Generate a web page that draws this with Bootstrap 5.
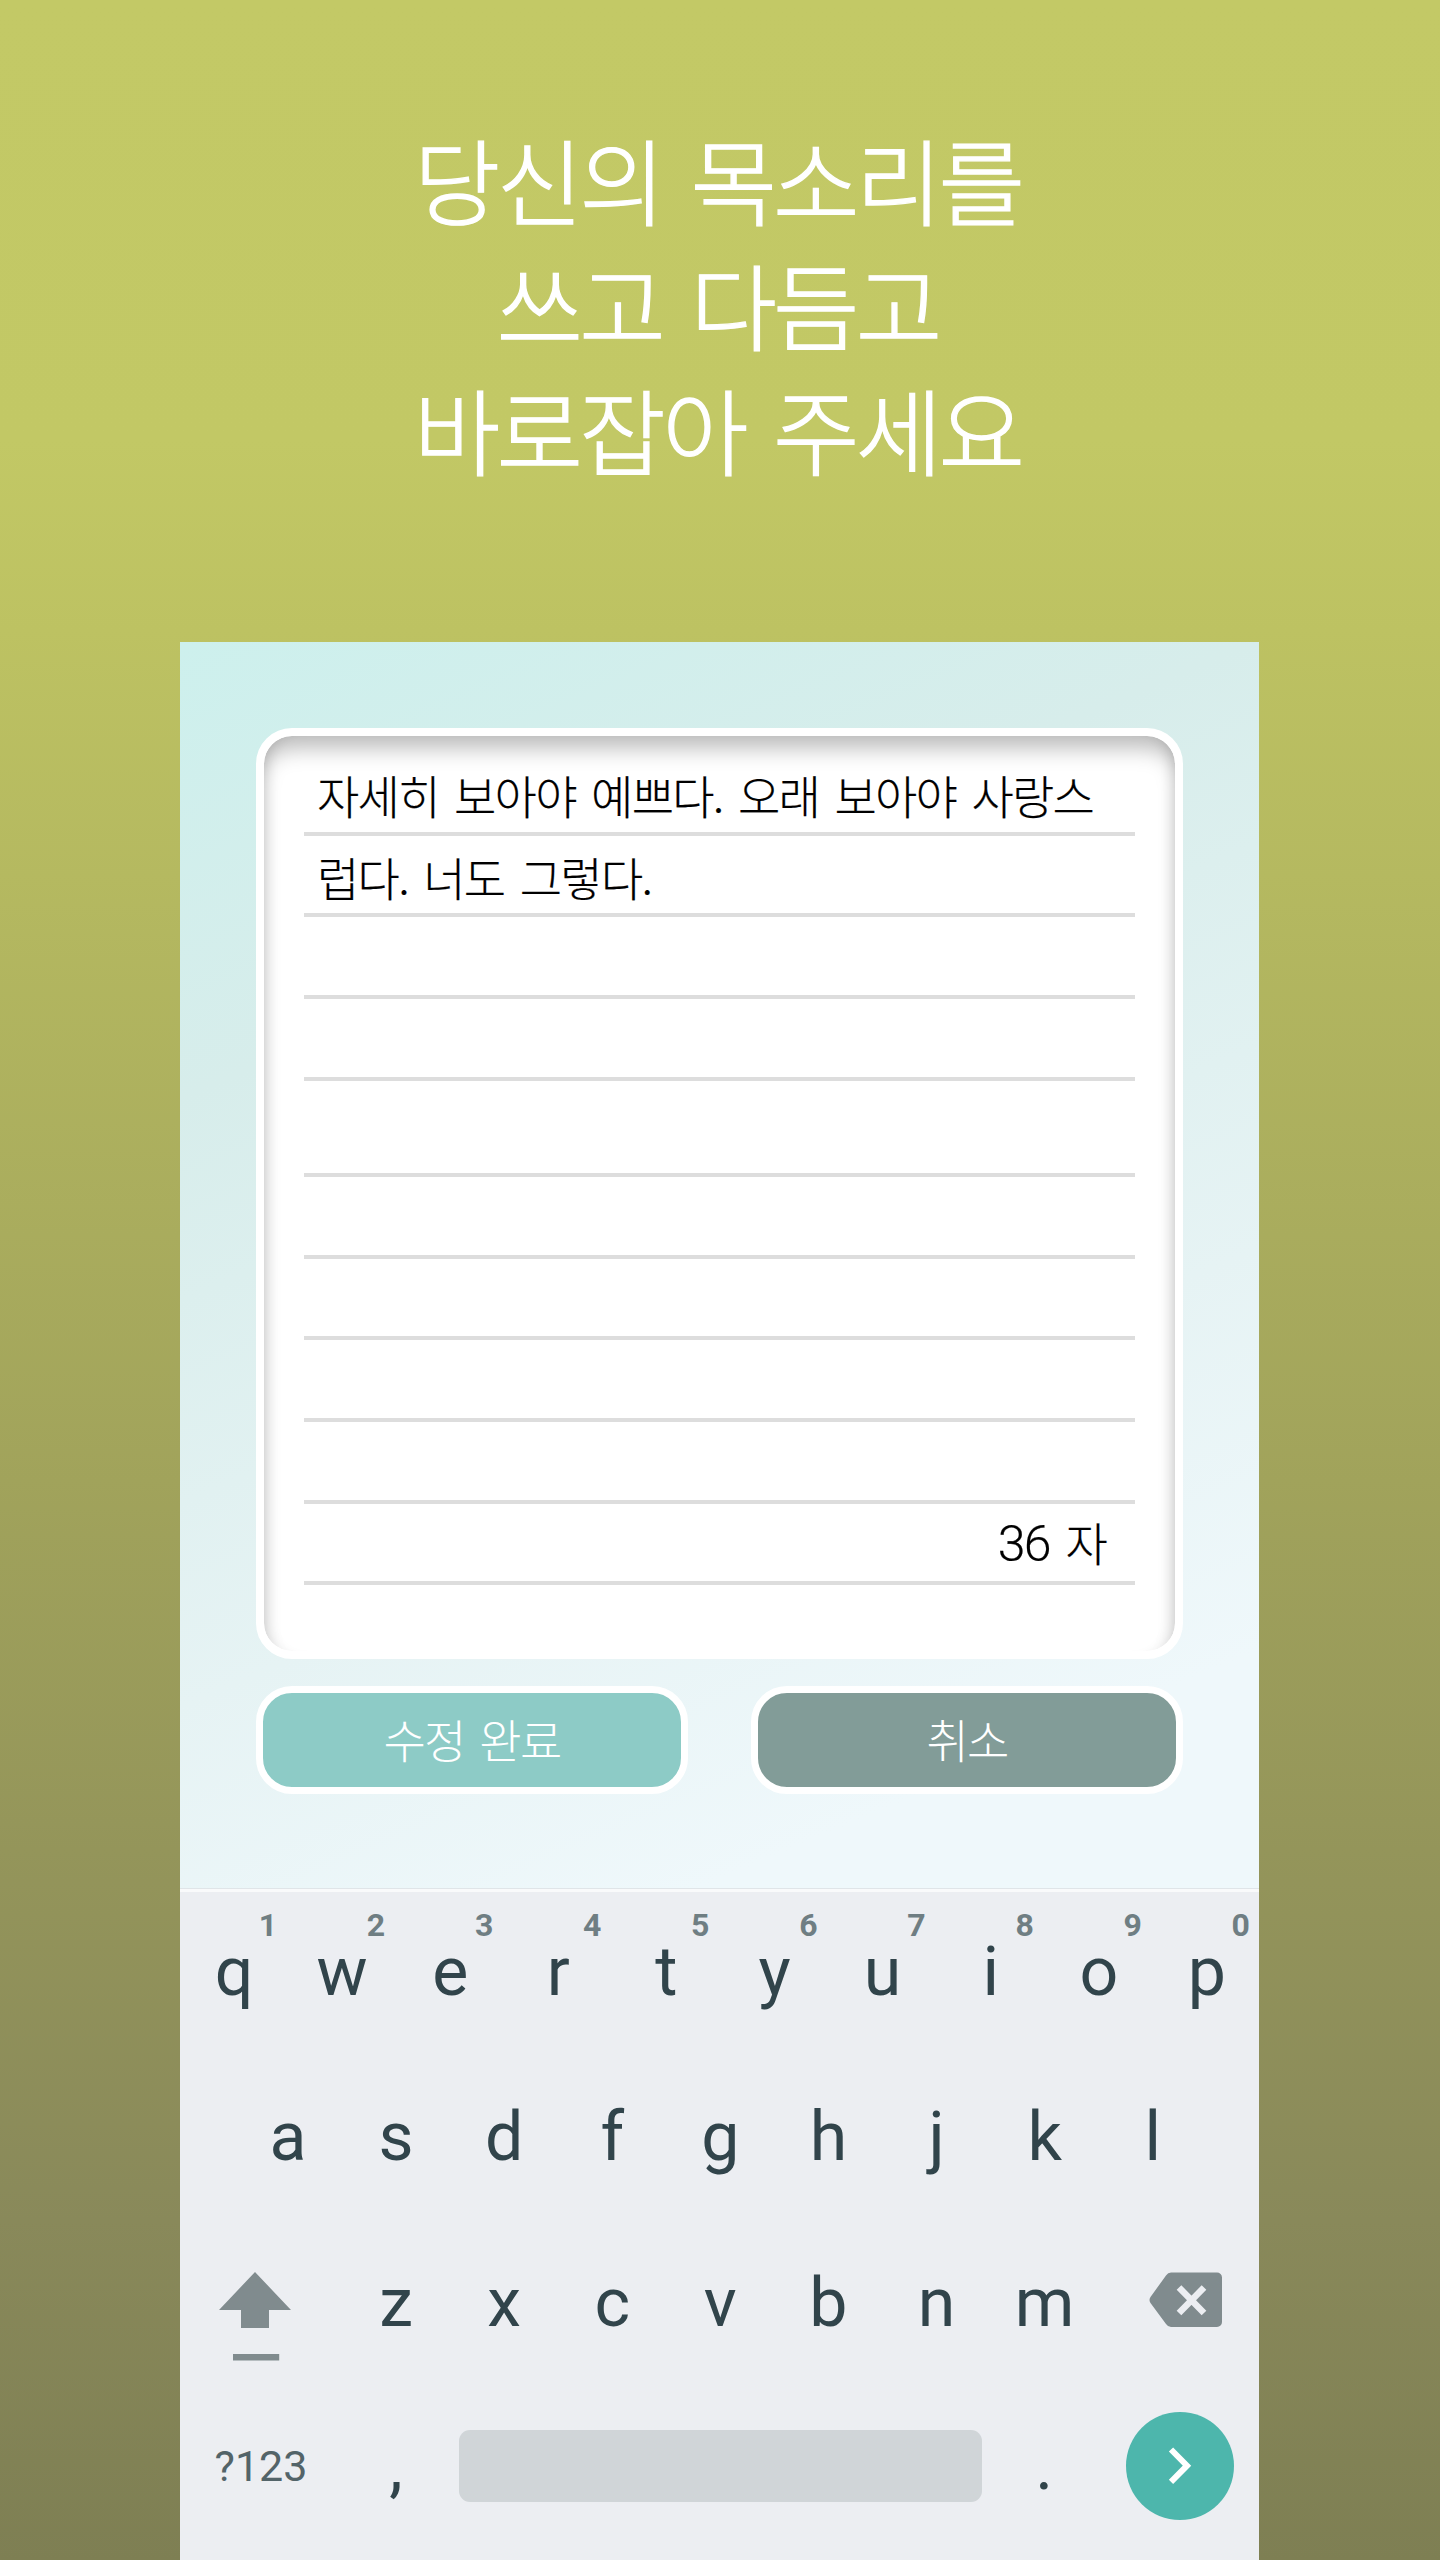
<!DOCTYPE html>
<html lang="ko">
<head>
<meta charset="utf-8">
<meta name="viewport" content="width=device-width, initial-scale=1">
<title>당신의 목소리를 쓰고 다듬고 바로잡아 주세요</title>
<link href="https://cdn.jsdelivr.net/npm/bootstrap@5.3.0/dist/css/bootstrap.min.css" rel="stylesheet">
<style>
  body { font-family: "Noto Sans CJK KR", sans-serif; font-weight: 300; }
  .promo { width: 1440px; height: 2560px; background: linear-gradient(180deg, #c3c966 0, #c2c865 440px, #bdc262 630px, #a1a35b 1480px, #94955a 1850px, #89895a 2220px, #7e7f53 2560px); }
  .headline { height: 642px; padding: 116px 5px 0 0; font-size: 94px; line-height: 125px; font-weight: 300; letter-spacing: -3.8px; word-spacing: 6px; -webkit-text-stroke: 1.3px #fff; }
  .phone { width: 1079px; margin-left: 180px; background: linear-gradient(157deg, #cdf0ed 0, #d7edeb 420px, #e6f3f4 980px, #eff8fb 1350px); }
  .editor { height: 1246px; padding: 86px 76px 0; }
  .note { height: 931px; padding: 18px 40px 0; border: 8px solid #fff; border-radius: 36px; background: #fff; box-shadow: inset 0 18px 22px -6px rgba(0,0,0,.27), inset 14px 0 14px -12px rgba(0,0,0,.12), inset -14px 0 14px -12px rgba(0,0,0,.12); }
  .note-line { height: 81.7px; border-bottom: 4px solid #ddd; color: #000; font-size: 46px; line-height: 80px; padding: 0 13px; white-space: nowrap; letter-spacing: -1.75px; word-spacing: 4.2px; -webkit-text-stroke: .2px #000; }
  .note-line.gap-line { height: 96.3px; }
  .note-line.count-line { padding-right: 29px; line-height: 75px; }
  .count-num { font-family: Roboto, sans-serif; font-size: 50px; font-weight: 300; letter-spacing: -1.5px; }
  .btn-note { width: 432px; height: 108px; border: 7px solid #fff; border-radius: 36px; color: #fff; font-size: 46px; font-weight: 300; line-height: 86px; padding: 0 0 5px; letter-spacing: -1.75px; word-spacing: 3.6px; }
  .btn-done { background: #8dcbc6; }
  .btn-cancel { background: #829c98; }
  .keyboard { height: 672px; padding-top: 1px; background: #eceef2; border-top: 1px solid #e0e5e8; box-shadow: inset 0 3px #f9fafb; font-family: Roboto, sans-serif; font-weight: 400; color: #31444b; font-size: 68px; }
  .key-row { height: 165.3px; }
  .key-row-home { padding-left: 54px; }
  .key { flex: none; width: 108.1px; height: 165.3px; line-height: 165.3px; text-align: center; }
  .key-hint { position: absolute; right: 11px; top: 16px; font-size: 32px; line-height: 38px; font-weight: 700; color: #6f7e83; }
  .key-wide { width: 162px; }
  .key-sym { font-size: 43px; color: #536469; }
  .key-row-last { height: 160.5px; }
  .space-bar { width: 523px; height: 72px; border-radius: 11px; background: #d0d5d8; margin: 0 8px 0 9px; }
  .go { width: 108px; height: 108px; margin-right: 25px; background: #4db6ac; }
</style>
<script src="https://cdn.jsdelivr.net/npm/bootstrap@5.3.0/dist/js/bootstrap.bundle.min.js"></script>
</head>
<body>
<main class="promo overflow-hidden">
  <h1 class="headline text-white text-center m-0">당신의 목소리를<br>쓰고 다듬고<br>바로잡아 주세요</h1>
  <section class="phone">
    <div class="editor">
      <div class="note">
        <div class="note-line">자세히 보아야 예쁘다. 오래 보아야 사랑스</div>
        <div class="note-line">럽다. 너도 그렇다.</div>
        <div class="note-line"></div>
        <div class="note-line"></div>
        <div class="note-line gap-line"></div>
        <div class="note-line"></div>
        <div class="note-line"></div>
        <div class="note-line"></div>
        <div class="note-line"></div>
        <div class="note-line count-line text-end"><span class="count-num">36</span> 자</div>
      </div>
      <div class="d-flex justify-content-between" style="padding-top:27px">
        <button type="button" class="btn btn-note btn-done">수정 완료</button>
        <button type="button" class="btn btn-note btn-cancel">취소</button>
      </div>
    </div>
    <div class="keyboard overflow-hidden">
      <div class="key-row d-flex">
        <div class="key position-relative">q<span class="key-hint">1</span></div>
        <div class="key position-relative">w<span class="key-hint">2</span></div>
        <div class="key position-relative">e<span class="key-hint">3</span></div>
        <div class="key position-relative">r<span class="key-hint">4</span></div>
        <div class="key position-relative">t<span class="key-hint">5</span></div>
        <div class="key position-relative">y<span class="key-hint">6</span></div>
        <div class="key position-relative">u<span class="key-hint">7</span></div>
        <div class="key position-relative">i<span class="key-hint">8</span></div>
        <div class="key position-relative">o<span class="key-hint">9</span></div>
        <div class="key position-relative">p<span class="key-hint">0</span></div>
      </div>
      <div class="key-row key-row-home d-flex">
        <div class="key">a</div><div class="key">s</div><div class="key">d</div><div class="key">f</div><div class="key">g</div><div class="key">h</div><div class="key">j</div><div class="key">k</div><div class="key">l</div>
      </div>
      <div class="key-row d-flex">
        <div class="key-wide flex-shrink-0"><svg class="d-block" width="162" height="165" viewBox="180 2221 162 165" fill="#808b8e"><path d="M255 2272 291 2310H269V2328H241V2310H219Z"/><path d="M233 2354h46.200v6.500H233z"/></svg></div>
        <div class="key">z</div><div class="key">x</div><div class="key">c</div><div class="key">v</div><div class="key">b</div><div class="key">n</div><div class="key">m</div>
        <div class="flex-grow-1"><svg class="d-block" width="160" height="165" viewBox="1099 2221 160 165"><path fill="#808b8e" d="M1171 2272.500H1217a5 5 0 0 1 5 5V2322a5 5 0 0 1-5 5H1171q-3 0-5-3L1150.500 2303q-2-3 0-6L1166 2275.500q2-3 5-3Z"/><path d="m1179 2287.500 25 25.500m0-25.500-25 25.500" stroke="#eceef2" stroke-width="6.500"/></svg></div>
      </div>
      <div class="key-row key-row-last d-flex align-items-center">
        <div class="key key-wide key-sym">?123</div>
        <div class="key">,</div>
        <div class="space-bar flex-shrink-0"></div>
        <div class="key">.</div>
        <div class="go rounded-circle ms-auto flex-shrink-0"><svg class="d-block" width="108" height="108" viewBox="1126 2412 108 108"><path d="m1171 2449.500 16 16.200-16 16.200" fill="none" stroke="#fff" stroke-width="6"/></svg></div>
      </div>
    </div>
  </section>
</main>
</body>
</html>
